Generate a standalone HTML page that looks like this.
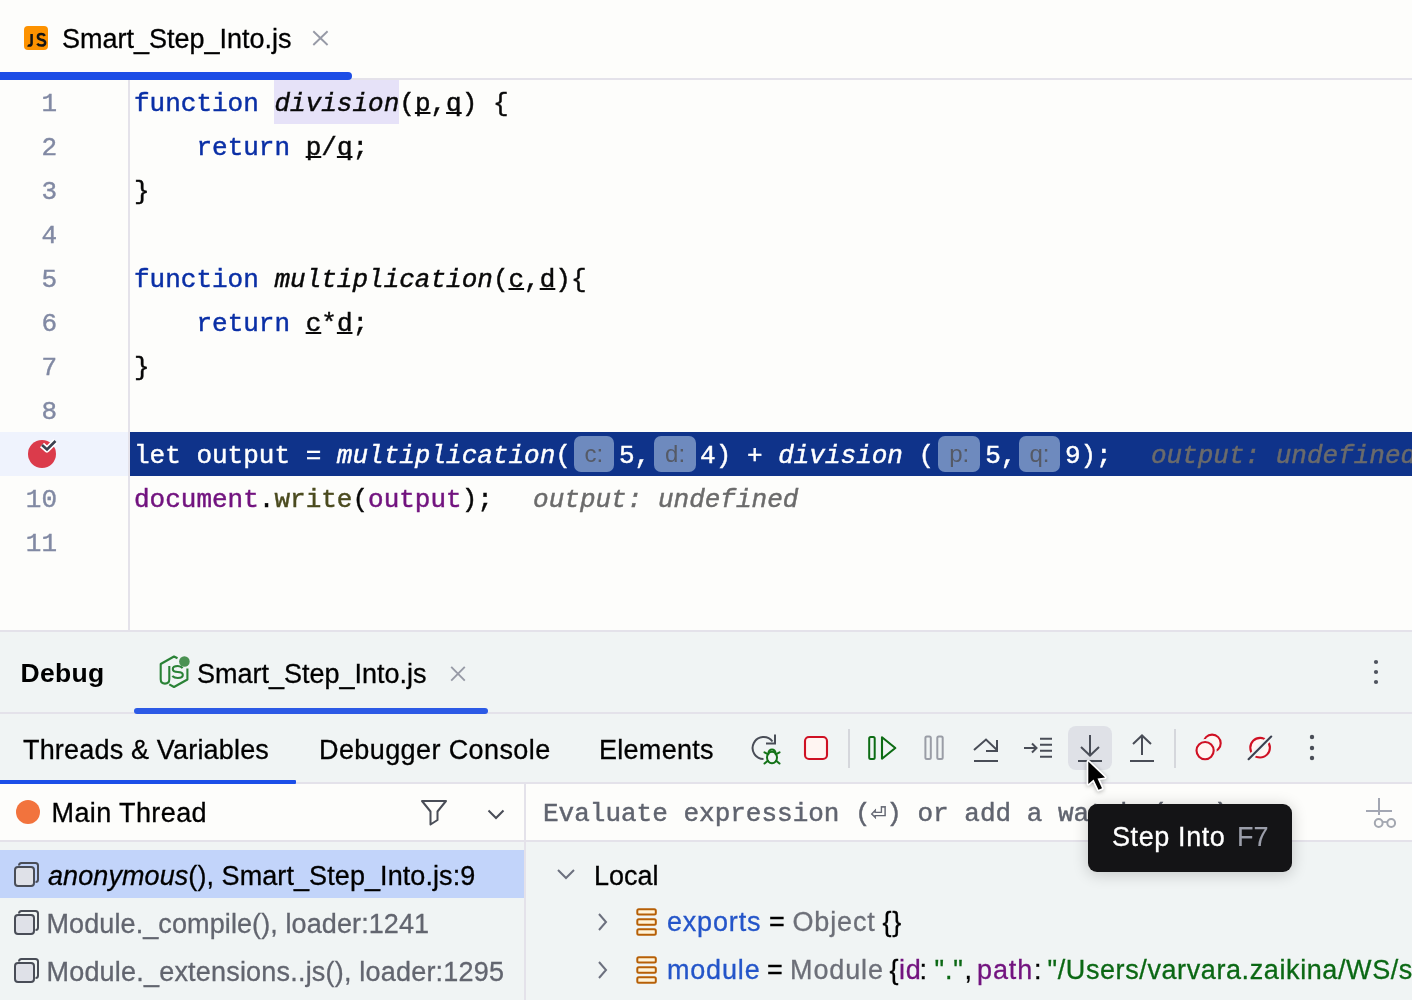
<!DOCTYPE html>
<html><head><meta charset="utf-8">
<style>
*{margin:0;padding:0;box-sizing:border-box}
html,body{width:1412px;height:1000px;overflow:hidden;background:#fdfdfb}
body{position:relative;font-family:"Liberation Sans",sans-serif;color:#000;-webkit-text-stroke:0.3px currentColor}
.a{position:absolute}
.mono{font-family:"Liberation Mono",monospace}
.sans{font-family:"Liberation Sans",sans-serif}
.ln{position:absolute;left:0;-webkit-text-stroke:0.4px currentColor;transform:translateY(2px);width:57px;text-align:right;font-family:"Liberation Mono",monospace;font-size:26px;color:#8189a3;height:44px;line-height:44px}
.cl{position:absolute;left:134px;transform:translateY(2px);-webkit-text-stroke:0.45px currentColor;white-space:pre;font-family:"Liberation Mono",monospace;font-size:26px;height:44px;line-height:44px;color:#080808}
.kw{color:#0a2fa6}
.it{font-style:italic}
.ul{text-decoration:underline;text-decoration-thickness:2px;text-underline-offset:1px;text-decoration-skip-ink:none}
.pv{color:#72137f}
.fn{color:#4b4b1f}
.hint{color:#6b6b6b;font-style:italic}
.tk{height:40px;line-height:40px;font-size:27px;white-space:pre;letter-spacing:0.85px}
.ph{display:inline-block;vertical-align:top;height:36px;margin-top:2px;-webkit-text-stroke:0;border-radius:7px;background:#6e8abe;color:#555a66;font-family:"Liberation Sans",sans-serif;font-size:24px;line-height:36px;text-align:center;font-style:normal}
</style></head>
<body><div style="position:absolute;left:0;top:0;width:1412px;height:1000px;will-change:transform">
<!-- editor tab bar -->
<div class="a" style="left:0;top:0;width:1412px;height:79px;background:#fdfdfb"></div>
<div class="a" style="left:24px;top:26px;width:24px;height:24px;border-radius:4px;background:#fd9200"></div>
<svg class="a" style="left:24px;top:26px" width="24" height="24" viewBox="0 0 24 24"><g fill="none" stroke="#141414" stroke-width="2.5">
<path d="M7.6 8V17.2Q7.6 19.6 5.2 19.6Q4.3 19.6 3.8 19.2"/>
<path d="M20.8 9.8Q19.8 8 17.3 8Q13.9 8 13.9 10.7Q13.9 13 17.3 13.7Q21.2 14.3 21.2 16.7Q21.2 19.6 17.3 19.6Q14.5 19.6 13.3 17.6"/>
</g></svg>
<div class="a" style="left:62px;top:19px;height:40px;line-height:40px;font-size:27px;color:#000;white-space:pre">Smart_Step_Into.js</div>
<svg class="a" style="left:310px;top:28px" width="20" height="20" viewBox="0 0 20 20"><path d="M3.3 3.2L17.6 17M17.6 3.2L3.3 17" stroke="#979aa6" stroke-width="1.9"/></svg>
<div class="a" style="left:0;top:78px;width:1412px;height:2px;background:#e4e2ea"></div>
<div class="a" style="left:-8px;top:72px;width:360px;height:8px;border-radius:4px;background:#1c4de6"></div>

<!-- editor -->
<div class="a" style="left:0;top:80px;width:1412px;height:551px;background:#fdfdfb"></div>
<div class="a" style="left:128px;top:80px;width:2px;height:551px;background:#e4e2ea"></div>
<div class="a" style="left:0;top:432px;width:128px;height:44px;background:#eff3fd"></div>
<div class="a" style="left:130px;top:432px;width:1282px;height:44px;background:#0f338a"></div>
<div class="a" style="left:274px;top:80px;width:125px;height:44px;background:#e6e2f8"></div>

<div class="ln" style="top:80px">1</div>
<div class="ln" style="top:124px">2</div>
<div class="ln" style="top:168px">3</div>
<div class="ln" style="top:212px">4</div>
<div class="ln" style="top:256px">5</div>
<div class="ln" style="top:300px">6</div>
<div class="ln" style="top:344px">7</div>
<div class="ln" style="top:388px">8</div>
<div class="ln" style="top:476px">10</div>
<div class="ln" style="top:520px">11</div>

<div class="cl" style="top:80px"><span class="kw">function</span> <span class="it">division</span>(<span class="ul">p</span>,<span class="ul">q</span>) {</div>
<div class="cl" style="top:124px">    <span class="kw">return</span> <span class="ul">p</span>/<span class="ul">q</span>;</div>
<div class="cl" style="top:168px">}</div>
<div class="cl" style="top:256px"><span class="kw">function</span> <span class="it">multiplication</span>(<span class="ul">c</span>,<span class="ul">d</span>){</div>
<div class="cl" style="top:300px">    <span class="kw">return</span> <span class="ul">c</span>*<span class="ul">d</span>;</div>
<div class="cl" style="top:344px">}</div>
<div class="cl" style="top:432px;color:#fff">let output = <span class="it">multiplication</span>(<span class="ph" style="width:40px;margin-left:3px;margin-right:5px">c:</span>5,<span class="ph" style="width:42px;margin-left:4px;margin-right:4px">d:</span>4) + <span class="it">division</span> (<span class="ph" style="width:42px;margin-left:4px;margin-right:5px">p:</span>5,<span class="ph" style="width:41px;margin-left:2.5px;margin-right:5px">q:</span>9);  <span class="hint" style="margin-left:8px">output: undefined</span></div>
<div class="cl" style="top:476px"><span class="pv">document</span>.<span class="fn">write</span>(<span class="pv">output</span>);  <span class="hint" style="margin-left:9px">output: undefined</span></div>

<!-- breakpoint -->
<svg class="a" style="left:26px;top:436px" width="34" height="36" viewBox="0 0 34 36"><circle cx="16" cy="18" r="14" fill="#db3b4b"/><path d="M16 9L21 13.5L29.5 5" stroke="#fff" stroke-width="6" fill="none" stroke-linejoin="round" stroke-linecap="butt"/><path d="M16 9L21 13.5L29.5 5" stroke="#3b4150" stroke-width="2.6" fill="none"/></svg>

<!-- debug panel -->
<div class="a" style="left:0;top:630px;width:1412px;height:370px;background:#f0f4f4"></div>
<div class="a" style="left:0;top:630px;width:1412px;height:2px;background:#e4e2ea"></div>

<!-- debug header -->
<div class="a" style="left:20.5px;top:653px;height:40px;line-height:40px;font-size:26.5px;font-weight:bold;white-space:pre;-webkit-text-stroke:0;letter-spacing:0.3px">Debug</div>
<svg class="a" style="left:150px;top:645px" width="50" height="55" viewBox="150 645 50 55">
<g fill="none" stroke="#2a8236" stroke-width="2.1" stroke-linejoin="round">
<path d="M177.5 658.3L174 656.5L160.7 664V679.3Q160.7 683.6 165 683.6Q169.3 683.6 169.3 679.3V666"/>
<path d="M169.3 684.3L174 687L187.4 679.5V668.6"/>
<path d="M182.6 668.2Q181 666 177.8 666Q172.8 666 172.8 669Q172.8 672 177.8 672Q182.8 672 182.8 675Q182.8 678 177.8 678Q174.3 678 172.3 676"/>
</g>
<circle cx="184.4" cy="661.5" r="5.3" fill="#4a9152"/>
</svg>
<div class="a" style="left:197px;top:654px;height:40px;line-height:40px;font-size:27px;white-space:pre">Smart_Step_Into.js</div>
<svg class="a" style="left:448px;top:664px" width="20" height="20" viewBox="0 0 20 20"><path d="M3.2 2.8L16.8 16.6M16.8 2.8L3.2 16.6" stroke="#979aa6" stroke-width="1.9"/></svg>
<div class="a" style="left:0;top:712px;width:1412px;height:2px;background:#e4e2ea"></div>
<div class="a" style="left:134px;top:708px;width:354px;height:6px;border-radius:3px;background:#2c5ae6"></div>

<!-- debug tabs row -->
<div class="a" style="left:23px;top:730px;height:40px;line-height:40px;font-size:27px;letter-spacing:0.18px;white-space:pre">Threads &amp; Variables</div>
<div class="a" style="left:319px;top:730px;height:40px;line-height:40px;font-size:27px;letter-spacing:0.4px;white-space:pre">Debugger Console</div>
<div class="a" style="left:599px;top:730px;height:40px;line-height:40px;font-size:27px;letter-spacing:0.28px;white-space:pre">Elements</div>
<div class="a" style="left:0;top:782px;width:1412px;height:2px;background:#e4e2ea"></div>
<div class="a" style="left:0;top:780px;width:296px;height:4px;border-radius:0 1px 1px 0;background:#1c4fe8"></div>

<!-- toolbar -->
<div class="a" style="left:1068px;top:726px;width:44px;height:44px;border-radius:8px;background:#dfe1e7"></div>
<svg class="a" style="left:740px;top:720px" width="600" height="60" viewBox="740 720 600 60">
 <!-- rerun -->
 <path d="M763.5 759A11 11 0 1 1 772.5 741.5" fill="none" stroke="#494d57" stroke-width="2"/>
 <path d="M775 734.5V743.5H766" fill="none" stroke="#494d57" stroke-width="2"/>
 <!-- bug -->
 <path d="M768.5 753A3.5 3.5 0 0 1 775.5 753Z" fill="#f0f4f4" stroke="#137217" stroke-width="2"/>
 <ellipse cx="772" cy="757.5" rx="5" ry="5.8" fill="#f0f4f4" stroke="#137217" stroke-width="2"/>
 <path d="M764.5 752.3L768.3 754.3M779.5 752.3L775.7 754.3M764.5 763.5L767.8 760.8M779.5 763.5L776.2 760.8" stroke="#137217" stroke-width="2" stroke-linecap="round"/>
 <!-- stop -->
 <rect x="805" y="737" width="22" height="22" rx="4" fill="#fff5f2" stroke="#cf1023" stroke-width="2.1"/>
 <!-- separator -->
 <rect x="848" y="729" width="2" height="39" fill="#d5d7dc"/>
 <!-- resume -->
 <rect x="869.2" y="737" width="5.5" height="22" rx="1.5" fill="none" stroke="#0d6c14" stroke-width="2"/>
 <path d="M882 737.3L895.3 748L882 758.7Z" fill="none" stroke="#0d6c14" stroke-width="2.1" stroke-linejoin="round"/>
 <!-- pause -->
 <rect x="925.4" y="736.5" width="5.4" height="22.5" rx="1.5" fill="none" stroke="#9a9da6" stroke-width="2"/>
 <rect x="937.3" y="736.5" width="5.4" height="22.5" rx="1.5" fill="none" stroke="#9a9da6" stroke-width="2"/>
 <!-- step over -->
 <path d="M974 750L986 739.5L997 750" fill="none" stroke="#494d57" stroke-width="2"/>
 <path d="M997 740V751H986" fill="none" stroke="#494d57" stroke-width="2"/>
 <rect x="974" y="760" width="24" height="2" fill="#494d57"/>
 <!-- force step into -->
 <path d="M1024 748H1036M1032 743.5L1036.5 748L1032 752.5" fill="none" stroke="#494d57" stroke-width="2"/>
 <path d="M1040 738.8H1052M1040 744.8H1052M1040 750.8H1052M1040 756.8H1052" fill="none" stroke="#494d57" stroke-width="2"/>
 <!-- step into -->
 <path d="M1090 735V755M1081 747L1090 755.5L1099 747" fill="none" stroke="#494d57" stroke-width="2"/>
 <rect x="1078" y="760" width="24" height="2" fill="#494d57"/>
 <!-- step out -->
 <path d="M1142 736V755M1133 744L1142 735.5L1151 744" fill="none" stroke="#494d57" stroke-width="2"/>
 <rect x="1130" y="760" width="24" height="2" fill="#494d57"/>
 <!-- separator -->
 <rect x="1174" y="729" width="2" height="39" fill="#d5d7dc"/>
 <!-- view breakpoints -->
 <circle cx="1212.1" cy="743.2" r="8.6" fill="#fff5f2" stroke="#cf1023" stroke-width="2.1"/>
 <circle cx="1205.1" cy="750.6" r="8.6" fill="#fff5f2" stroke="#f0f4f4" stroke-width="6"/>
 <circle cx="1205.1" cy="750.6" r="8.6" fill="#fff5f2" stroke="#cf1023" stroke-width="2.1"/>
 <!-- mute -->
 <circle cx="1260.1" cy="747.7" r="9.8" fill="#fff5f2" stroke="#cf1023" stroke-width="2.1"/>
 <path d="M1248.6 759.2L1271.2 736.5" stroke="#f0f4f4" stroke-width="6"/>
 <path d="M1248.6 759.2L1271.2 736.5" stroke="#3b4150" stroke-width="2.1" stroke-linecap="round"/>
 <!-- more -->
 <circle cx="1312" cy="737" r="2.2" fill="#494d57"/><circle cx="1312" cy="748" r="2.2" fill="#494d57"/><circle cx="1312" cy="758" r="2.2" fill="#494d57"/>
</svg>

<!-- header more -->
<svg class="a" style="left:1366px;top:656px" width="20" height="32" viewBox="0 0 20 32"><circle cx="10" cy="6" r="2.1" fill="#4f535e"/><circle cx="10" cy="16" r="2.1" fill="#4f535e"/><circle cx="10" cy="26" r="2.1" fill="#4f535e"/></svg>

<!-- left pane -->
<div class="a" style="left:0;top:784px;width:524px;height:56px;background:#fdfdfb"></div>
<div class="a" style="left:16px;top:800px;width:24px;height:24px;border-radius:50%;background:#f2733d"></div>
<div class="a" style="left:51.5px;top:793px;height:40px;line-height:40px;font-size:27px;letter-spacing:0.4px;white-space:pre">Main Thread</div>
<svg class="a" style="left:418px;top:796px" width="32" height="32" viewBox="0 0 32 32"><path d="M4 5H28L19.5 15.5V24L12.5 28.5V15.5Z" fill="none" stroke="#494d57" stroke-width="2" stroke-linejoin="round"/></svg>
<svg class="a" style="left:484px;top:804px" width="24" height="20" viewBox="0 0 24 20"><path d="M4.5 6.5L12 14L19.5 6.5" fill="none" stroke="#494d57" stroke-width="2"/></svg>
<div class="a" style="left:0;top:840px;width:1412px;height:2px;background:#e4e2ea"></div>
<div class="a" style="left:0;top:850px;width:524px;height:48px;background:#c2d4fa"></div>
<div class="a" style="left:524px;top:784px;width:2px;height:216px;background:#e4e2ea"></div>

<div class="a" style="left:48px;top:856px;height:40px;line-height:40px;font-size:27px;letter-spacing:0.08px;white-space:pre"><i>anonymous</i>(), Smart_Step_Into.js:9</div>
<div class="a" style="left:46.5px;top:904px;height:40px;line-height:40px;font-size:27px;letter-spacing:0.1px;white-space:pre;color:#62656f">Module._compile(), loader:1241</div>
<div class="a" style="left:46.5px;top:952px;height:40px;line-height:40px;font-size:27px;letter-spacing:0.2px;white-space:pre;color:#62656f">Module._extensions..js(), loader:1295</div>

<!-- right pane -->
<div class="a" style="left:526px;top:784px;width:886px;height:56px;background:#fdfdfb"></div>
<div class="a mono" style="left:543px;top:793.5px;height:40px;line-height:40px;font-size:26px;white-space:pre;color:#60646f;-webkit-text-stroke:0.45px #60646f">Evaluate expression (⏎) or add a watch (⇧⌘⏎)</div>
<svg class="a" style="left:1362px;top:794px" width="40" height="40" viewBox="0 0 40 40"><path d="M17 4V21M4 17H30" stroke="#a3a7b3" stroke-width="2"/><circle cx="16.7" cy="29" r="3.9" fill="none" stroke="#a3a7b0" stroke-width="2"/><circle cx="29.2" cy="29" r="3.9" fill="none" stroke="#a3a7b0" stroke-width="2"/><path d="M20.5 28H25.4" stroke="#a3a7b0" stroke-width="1.8"/></svg>

<svg class="a" style="left:554px;top:864px" width="24" height="20" viewBox="0 0 24 20"><path d="M4 6L12 14L20 6" fill="none" stroke="#6c707e" stroke-width="2"/></svg>
<div class="a" style="left:594px;top:855.5px;height:40px;line-height:40px;font-size:27px;white-space:pre">Local</div>

<!-- frame icons -->
<svg class="a" style="left:12px;top:860px" width="30" height="128" viewBox="0 0 30 128">
 <g id="fi"><path d="M7 5.5Q7 3 9.5 3H23.5Q26 3 26 5.5V19.5Q26 22 23.5 22" fill="none" stroke="#494d57" stroke-width="2"/>
 <rect x="3" y="7" width="19" height="19" rx="3" fill="#dfe1e8" stroke="#494d57" stroke-width="2"/></g>
 <use href="#fi" y="48"/><use href="#fi" y="96"/>
</svg>

<!-- tree rows -->
<svg class="a" style="left:594px;top:910px" width="20" height="72" viewBox="0 0 20 72"><path d="M5 4L12 12L5 20M5 52L12 60L5 68" fill="none" stroke="#6c707e" stroke-width="2"/></svg>
<svg class="a" style="left:632px;top:906px" width="28" height="82" viewBox="0 0 28 82">
 <g id="db" fill="#fff3d9" stroke="#b65f06" stroke-width="2"><rect x="5.3" y="3.2" width="18.5" height="5.3" rx="1.5"/><rect x="5.3" y="13.2" width="18.5" height="5.5" rx="1.5"/><rect x="5.3" y="23.3" width="18.5" height="5.5" rx="1.5"/></g>
 <use href="#db" y="48"/>
</svg>
<div class="a tk" style="left:666.9px;top:902px;color:#2455c9">exports</div>
<div class="a tk" style="left:768.9px;top:902px;color:#000">=</div>
<div class="a tk" style="left:792.5px;top:902px;color:#6c6f78">Object</div>
<div class="a tk" style="left:882.5px;top:902px;color:#000">{}</div>
<div class="a tk" style="left:666.9px;top:950px;color:#2455c9">module</div>
<div class="a tk" style="left:766.9px;top:950px;color:#000">=</div>
<div class="a tk" style="left:790.1px;top:950px;color:#6c6f78">Module</div>
<div class="a tk" style="left:889.5px;top:950px;color:#000">{</div>
<div class="a tk" style="left:899px;top:950px;color:#72137f">id</div>
<div class="a tk" style="left:919.5px;top:950px;color:#000">:</div>
<div class="a tk" style="left:934.5px;top:950px;color:#0b6814">&quot;.&quot;</div>
<div class="a tk" style="left:964.5px;top:950px;color:#000">,</div>
<div class="a tk" style="left:977.1px;top:950px;color:#72137f">path</div>
<div class="a tk" style="left:1033.9px;top:950px;color:#000">:</div>
<div class="a tk" style="left:1047.5px;top:950px;color:#0b6814;letter-spacing:0.6px">&quot;/Users/varvara.zaikina/WS/studio</div>

<!-- tooltip -->
<div class="a" style="left:1088px;top:804px;width:204px;height:68px;border-radius:9px;background:#141416;box-shadow:0 2px 16px rgba(0,0,0,0.2)"></div>
<div class="a" style="left:1112px;top:817px;height:40px;line-height:40px;font-size:27px;letter-spacing:0.6px;white-space:pre;color:#fff">Step Into</div>
<div class="a" style="left:1237px;top:817px;height:40px;line-height:40px;font-size:27px;white-space:pre;color:#9b9eaa;-webkit-text-stroke:0.1px #9b9eaa">F7</div>

<!-- cursor -->
<svg class="a" style="left:1080px;top:752.5px;filter:drop-shadow(0 1.5px 2px rgba(0,0,0,0.3))" width="40" height="48" viewBox="0 0 40 48">
 <path d="M8.3 8.5V31L13.6 26.5L18.5 36.7L22 35.3L17.5 25.5L25 24.5Z" fill="#000" stroke="#fff" stroke-width="3.4" stroke-linejoin="round" paint-order="stroke"/>
</svg>
</div></body></html>
